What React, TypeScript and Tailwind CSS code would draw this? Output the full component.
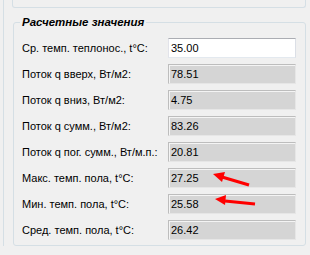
import React from "react";

const rows = [
  { label: "Ср. темп. теплонос., t°C:", value: "35.00", editable: true },
  { label: "Поток q вверх, Вт/м2:", value: "78.51" },
  { label: "Поток q вниз, Вт/м2:", value: "4.75" },
  { label: "Поток q сумм., Вт/м2:", value: "83.26" },
  { label: "Поток q пог. сумм., Вт/м.п.:", value: "20.81" },
  { label: "Макс. темп. пола, t°C:", value: "27.25" },
  { label: "Мин. темп. пола, t°C:", value: "25.58" },
  { label: "Сред. темп. пола, t°C:", value: "26.42" },
];

function Field({ value, editable }: { value: string; editable?: boolean }) {
  return editable ? (
    <div className="flex h-[20px] w-[128px] items-center border border-[#abadb3] border-b-[#e3e9ef] border-l-[#e2e3ea] border-r-[#dbdfe6] bg-white px-[2px] text-[#000]">
      {value}
    </div>
  ) : (
    <div className="flex h-[20px] w-[128px] items-center border border-[#bdbdbd] border-b-[#e6e6e6] border-r-[#e6e6e6] bg-[#d5d5d5] px-[2px] text-[#000] shadow-[inset_1px_1px_0_#f4f4f4]">
      {value}
    </div>
  );
}

export default function App() {
  return (
    <div
      className="relative h-[255px] w-[310px] overflow-hidden bg-[#f0f0f0] text-[11px] text-black"
      style={{ fontFamily: '"Liberation Sans", Arial, sans-serif' }}
    >
      <div className="ml-[3px] flex h-[246px] flex-col border-l border-[#d5dfe5] pl-[8px] pr-[4px]">
        <div className="h-[8px] rounded-b-[3px] border-x border-b border-[#d5dfe5]" />
        <fieldset className="mt-[7px] ml-[1px] rounded-[3px] border border-[#d5dfe5] pt-[9px] pr-[9px] pb-[5px] pl-[8px]">
          <legend className="-ml-[2px] px-[2px] text-[11.5px] leading-[14px] font-bold italic">
            Расчетные значения
          </legend>
          <div className="flex flex-col gap-[6px]">
            {rows.map((r) => (
              <div key={r.label} className="flex items-center">
                <div className="flex-1 whitespace-nowrap">{r.label}</div>
                <Field value={r.value} editable={r.editable} />
              </div>
            ))}
          </div>
        </fieldset>
      </div>
      <svg className="pointer-events-none absolute left-0 top-0" width="310" height="255">
        <line x1="249" y1="185" x2="222" y2="177" stroke="#ff0000" strokeWidth="3" />
        <polygon points="213,174 225,172 222,182" fill="#ff0000" />
        <line x1="255" y1="204" x2="225" y2="201" stroke="#ff0000" strokeWidth="3" />
        <polygon points="215,199 226,195 225,205" fill="#ff0000" />
      </svg>
    </div>
  );
}
